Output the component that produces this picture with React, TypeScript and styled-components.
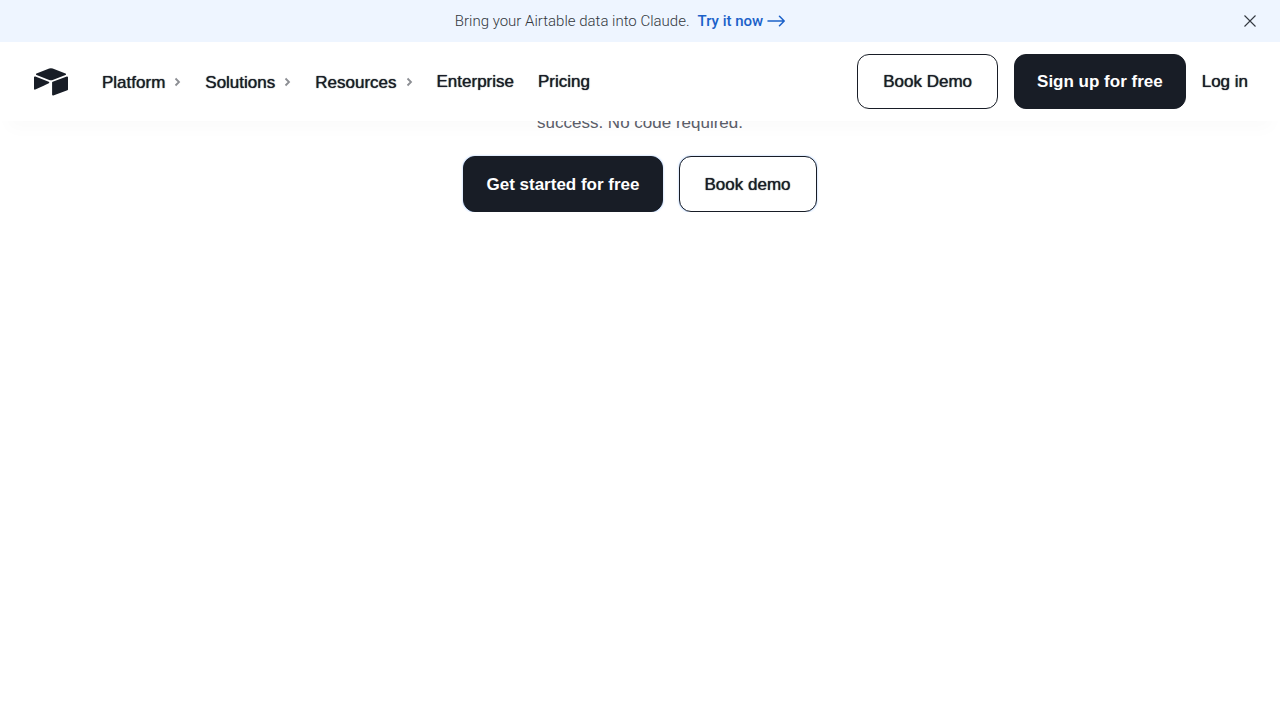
import React from "react";
import styled, { createGlobalStyle, css } from "styled-components";

const ink = "#181d26";

const GlobalStyle = createGlobalStyle`
  *, *::before, *::after { box-sizing: border-box; }
  body {
    margin: 0;
    background: #ffffff;
    color: ${ink};
    font-family: "Liberation Sans", Arial, sans-serif;
    font-size: 17px;
    line-height: 24px;
  }
  a { color: inherit; text-decoration: none; }
  button { font: inherit; color: inherit; cursor: pointer; }
`;

const medium = css`
  text-shadow: 0 0 1px currentColor;
`;

const Banner = styled.aside`
  display: grid;
  grid-template-columns: 40px 1fr 40px;
  align-items: center;
  min-height: 42px;
  padding: 0 10px;
  background: #eef5ff;
  font-size: 15px;
  line-height: 20px;
`;

const BannerMessage = styled.p`
  grid-column: 2;
  display: flex;
  justify-content: center;
  gap: 8px;
  margin: 0;
  padding-right: 40px;
  color: #333840;
  font-family: Roboto, "Liberation Sans", sans-serif;
  font-weight: 300;
`;

const BannerLink = styled.a`
  display: flex;
  align-items: center;
  gap: 4px;
  color: #1b61c9;
  font-weight: 500;
`;

const CloseButton = styled.button`
  display: grid;
  place-items: center;
  width: 40px;
  height: 40px;
  padding: 0;
  border: 0;
  background: none;
`;

const Header = styled.header`
  position: sticky;
  top: 0;
  z-index: 1;
  display: flex;
  align-items: center;
  justify-content: space-between;
  padding: 12px 32px;
  background: #ffffff;
  box-shadow: 0 16px 16px -8px rgba(15, 20, 30, 0.02);
`;

const Group = styled.div`
  display: flex;
  align-items: center;
  gap: 16px;
`;

const Logo = styled.a`
  display: flex;
  margin-right: 16px;
  padding: 0 2px;
`;

const Nav = styled.nav`
  display: flex;
  align-items: center;
  gap: 24px;
`;

const NavButton = styled.button`
  display: flex;
  align-items: center;
  gap: 9px;
  padding: 2px 0 0;
  border: 0;
  background: none;
  ${medium}
`;

const NavLink = styled.a`
  ${medium}
`;

const Button = styled.a<{ $filled?: boolean }>`
  display: flex;
  align-items: center;
  min-height: 55px;
  padding: 0 ${(p) => (p.$filled ? "22px" : "25px")};
  border: 1px solid ${ink};
  border-radius: 12px;
  background: ${(p) => (p.$filled ? ink : "#ffffff")};
  color: ${(p) => (p.$filled ? "#ffffff" : ink)};
  ${(p) => (p.$filled ? "font-weight: 700;" : medium)}
`;

const Hero = styled.main`
  display: flex;
  flex-direction: column;
  align-items: center;
  gap: 21px;
  margin-top: -10px;
`;

const Lead = styled.p`
  margin: 0;
  color: #5c606b;
`;

const Actions = styled(Group)`
  ${Button} {
    min-height: 56px;
    padding-top: 2px;
    box-shadow: 0 0 2px rgba(45, 127, 249, 0.5);
  }
`;

const Chevron = () => (
  <svg width="7" height="12" viewBox="0 0 7 12" fill="none" stroke="#8c8e93" strokeWidth="1.8" aria-hidden="true">
    <path d="M1.5 1.5 5 5 1.5 8.5" />
  </svg>
);

const menus = ["Platform", "Solutions", "Resources"];
const links = ["Enterprise", "Pricing"];

export default function App() {
  return (
    <>
      <GlobalStyle />
      <Banner>
        <BannerMessage>
          Bring your Airtable data into Claude.
          <BannerLink href="#claude">
            Try it now
            <svg width="18" height="12" viewBox="0 0 18 12" fill="none" stroke="currentColor" strokeWidth="1.5" strokeLinecap="round" strokeLinejoin="round" aria-hidden="true">
              <path d="M1 6H17M12.5 1.2 17.2 6l-4.7 4.8" />
            </svg>
          </BannerLink>
        </BannerMessage>
        <CloseButton type="button" aria-label="Close">
          <svg width="12" height="12" viewBox="0 0 12 12" stroke="#333840" strokeWidth="1.1" aria-hidden="true">
            <path d="M0.5 0.5 11.5 11.5M11.5 0.5 0.5 11.5" />
          </svg>
        </CloseButton>
      </Banner>
      <Header>
        <Group>
          <Logo href="#home" aria-label="Airtable home">
            <svg width="34" height="28" viewBox="0 0 34 29" preserveAspectRatio="none" fill={ink} aria-hidden="true">
              <path d="M15.2.5 2.5 5.7c-.7.3-.7 1.3 0 1.6l12.7 5c1.1.5 2.4.5 3.5 0l12.8-5c.7-.3.7-1.3 0-1.6L18.7.5a4.7 4.7 0 0 0-3.5 0Z" />
              <path d="M18.1 15.1v12.6c0 .6.6 1 1.2.8l14.1-5.5c.3-.1.6-.5.6-.8V9.6c0-.6-.6-1-1.2-.8l-14.1 5.5c-.4.1-.6.4-.6.8Z" />
              <path d="m14.8 15.8-4.2 2-.4.2-8.9 4.3c-.6.3-1.3-.1-1.3-.8V9.7c0-.2.1-.4.3-.6.4-.3.7-.3 1.1-.2l13.3 5.3c.7.3.8 1.3.1 1.6Z" />
            </svg>
          </Logo>
          <Nav aria-label="Main">
            {menus.map((m) => (
              <NavButton key={m} type="button">
                {m}
                <Chevron />
              </NavButton>
            ))}
            {links.map((l) => (
              <NavLink key={l} href={"#" + l.toLowerCase()}>{l}</NavLink>
            ))}
          </Nav>
        </Group>
        <Group>
          <Button href="#demo">Book Demo</Button>
          <Button href="#signup" $filled>Sign up for free</Button>
          <NavLink href="#login">Log in</NavLink>
        </Group>
      </Header>
      <Hero>
        <Lead>success. No code required.</Lead>
        <Actions>
          <Button href="#signup" $filled>Get started for free</Button>
          <Button href="#demo">Book demo</Button>
        </Actions>
      </Hero>
    </>
  );
}
